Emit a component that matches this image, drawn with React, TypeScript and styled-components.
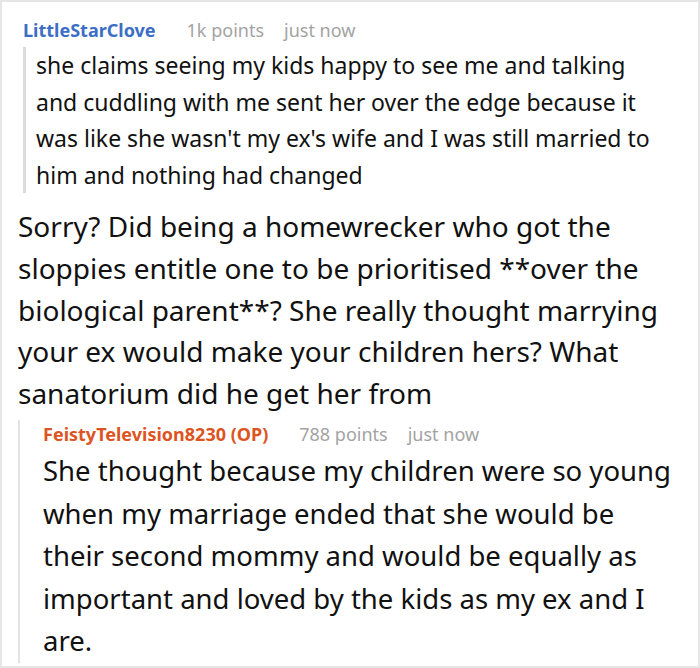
import styled, { createGlobalStyle } from "styled-components";

const GlobalStyle = createGlobalStyle`
  html, body {
    margin: 0;
    padding: 0;
    background: #fff;
  }
  body {
    font-family: "Noto Sans", "Open Sans", sans-serif;
    color: #111;
  }
`;

type MetaProps = {
  author: string;
  points: string;
  time: string;
  tone: "blue" | "orange";
};

const CommentMeta = ({ author, points, time, tone }: MetaProps) => (
  <Meta>
    <Author $tone={tone}>{author}</Author>
    <Faint>{points}</Faint>
    <Faint>{time}</Faint>
  </Meta>
);

export default function App() {
  return (
    <>
      <GlobalStyle />
      <Frame>
        <Parent>
          <CommentMeta
            author="LittleStarClove"
            points="1k points"
            time="just now"
            tone="blue"
          />
          <Quote>
            she claims seeing my kids happy to see me and talking and cuddling
            with me sent her over the edge because it was like she wasn't my
            ex's wife and I was still married to him and nothing had changed
          </Quote>
        </Parent>

        <Body>
          Sorry? Did being a homewrecker who got the sloppies entitle one to be
          prioritised **over the biological parent**? She really thought
          marrying your ex would make your children hers? What sanatorium did
          he get her from
        </Body>

        <Reply>
          <CommentMeta
            author="FeistyTelevision8230 (OP)"
            points="788 points"
            time="just now"
            tone="orange"
          />
          <ReplyText>
            She thought because my children were so young when my marriage
            ended that she would be their second mommy and would be equally as
            important and loved by the kids as my ex and I are.
          </ReplyText>
        </Reply>
      </Frame>
    </>
  );
}

const Frame = styled.div`
  box-sizing: border-box;
  width: 700px;
  height: 668px;
  border: 2px solid #e6e6e6;
  padding: 14px 0 0 0;
  overflow: hidden;
  display: flex;
  flex-direction: column;
`;

const Parent = styled.div`
  padding-left: 21px;
`;

const Meta = styled.div`
  display: flex;
  align-items: baseline;
  gap: 20px;
  font-size: 18px;
  line-height: 28px;
`;

const Author = styled.span<{ $tone: "blue" | "orange" }>`
  font-weight: 700;
  color: ${(p) => (p.$tone === "blue" ? "#3b6ec4" : "#dd5423")};
  margin-right: 11px;
`;

const Faint = styled.span`
  color: #a3a3a3;
`;

const Quote = styled.p`
  margin: 3px 0 0 0;
  padding: 0 32px 0 10px;
  border-left: 3px solid #dcdcdc;
  font-size: 23px;
  line-height: 36.5px;
`;

const Body = styled.p`
  margin: 13px 0 0 0;
  padding: 0 30px 0 16px;
  font-size: 28px;
  line-height: 41.8px;
`;

const Reply = styled.div`
  margin: 5px 0 0 16px;
  padding: 0 20px 0 23px;
  border-left: 2px solid #e3e3e3;
`;

const ReplyText = styled.p`
  margin: 2px 0 0 0;
  font-size: 27.5px;
  line-height: 42.6px;
`;
